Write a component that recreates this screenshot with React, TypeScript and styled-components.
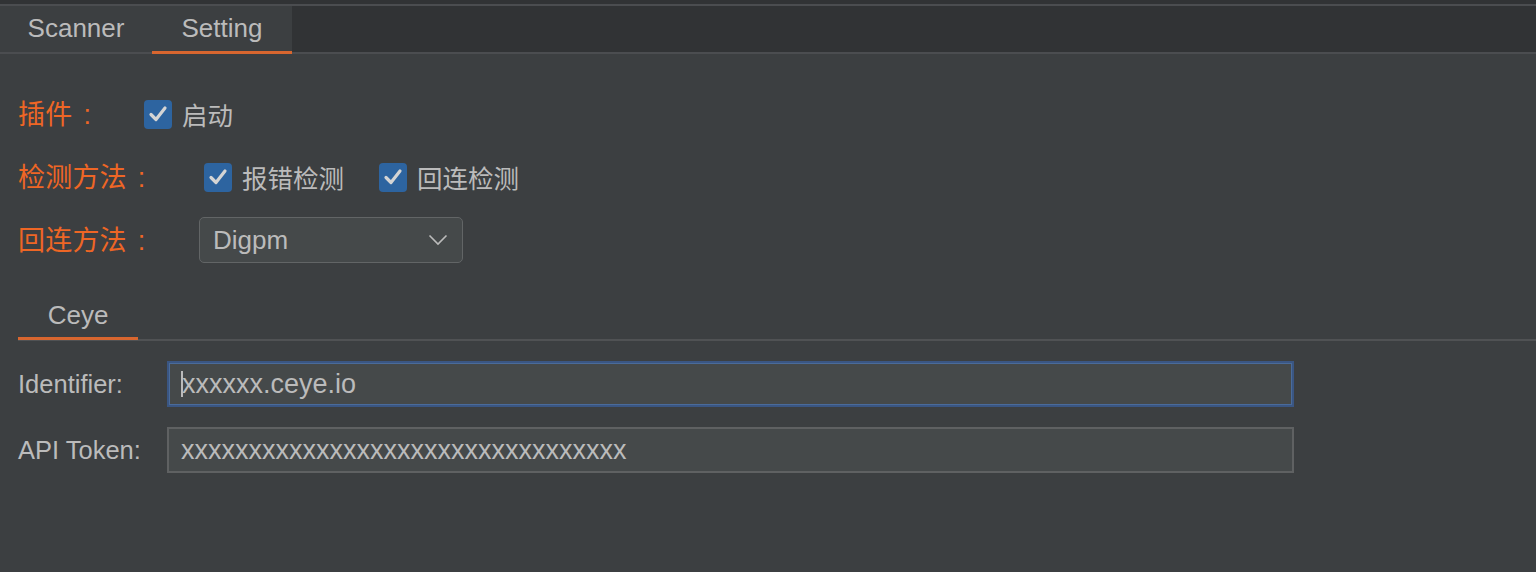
import React from "react";
import styled, { createGlobalStyle } from "styled-components";

const GlobalStyle = createGlobalStyle`
  html, body {
    margin: 0;
    padding: 0;
    background: #3c3f41;
  }
  body {
    font-family: "Liberation Sans", "Noto Sans CJK SC", sans-serif;
    color: #bbbbbb;
  }
  * { box-sizing: border-box; }
`;

const Page = styled.div`
  width: 1536px;
  height: 572px;
  background: #3c3f41;
  overflow: hidden;
  display: flex;
  flex-direction: column;
`;

const TopStrip = styled.div`
  height: 6px;
  background: #313335;
  border-bottom: 2px solid #4b4d50;
`;

const TabBar = styled.div`
  height: 48px;
  display: flex;
  background: #313335;
  border-bottom: 2px solid #4b4d50;
`;

const Tab = styled.div<{ $w: number; $active?: boolean }>`
  position: relative;
  width: ${(p) => p.$w}px;
  height: 46px;
  display: flex;
  align-items: center;
  justify-content: center;
  padding-bottom: 2px;
  background: #3c3f41;
  font-size: 26px;
  color: #bbbbbb;
  &::after {
    content: "";
    display: ${(p) => (p.$active ? "block" : "none")};
    position: absolute;
    left: 0;
    right: 0;
    bottom: -2px;
    height: 3px;
    background: #d8662f;
  }
`;

const Content = styled.div`
  padding: 37px 0 0 18px;
  display: flex;
  flex-direction: column;
  gap: 17px;
`;

const Row = styled.div`
  height: 46px;
  display: flex;
  align-items: center;
`;

const Label = styled.div<{ $w: number }>`
  width: ${(p) => p.$w}px;
  flex: none;
  font-family: "Noto Sans CJK SC", "Liberation Sans", sans-serif;
  font-size: 27px;
  color: #ee6625;
  line-height: 1;
  letter-spacing: 0.2px;
`;

const Colon = styled.span`
  font-family: "Liberation Sans", sans-serif;
  margin-left: 11px;
`;

const CheckGroup = styled.div`
  display: flex;
  align-items: center;
  gap: 35px;
`;

const CheckItem = styled.label`
  display: flex;
  align-items: center;
  gap: 10px;
  font-family: "Noto Sans CJK SC", "Liberation Sans", sans-serif;
  font-size: 25.5px;
  color: #bbbbbb;
  line-height: 1;
`;

const Box = styled.span`
  width: 28px;
  height: 29px;
  border-radius: 4px;
  background: #2d64a0;
  display: flex;
  align-items: center;
  justify-content: center;
`;

const Select = styled.div`
  width: 264px;
  height: 46px;
  border: 1px solid #626566;
  border-radius: 5px;
  background: #45494a;
  display: flex;
  align-items: center;
  justify-content: space-between;
  padding: 0 14px 0 13px;
  font-size: 26px;
  color: #bbbbbb;
`;

const SubTabBar = styled.div`
  margin: 31px 0 0 18px;
  display: flex;
  border-bottom: 2px solid #505254;
`;

const SubTab = styled.div`
  position: relative;
  width: 120px;
  height: 45px;
  display: flex;
  align-items: center;
  justify-content: center;
  padding-bottom: 2px;
  font-size: 26px;
  color: #bbbbbb;
  &::after {
    content: "";
    position: absolute;
    left: 0;
    right: 0;
    bottom: -1px;
    height: 3px;
    background: #d8662f;
  }
`;

const Form = styled.div`
  margin: 20px 0 0 18px;
  display: grid;
  grid-template-columns: 149px 1127px;
  row-gap: 20px;
  align-items: center;
`;

const FieldLabel = styled.div`
  font-size: 25.5px;
  color: #bbbbbb;
`;

const Field = styled.div<{ $focused?: boolean }>`
  height: 46px;
  background: #45494a;
  border: 2px solid ${(p) => (p.$focused ? "#3a5683" : "#5f6162")};
  box-shadow: ${(p) => (p.$focused ? "inset 0 0 0 1px #4a6b9a" : "none")};
  display: flex;
  align-items: center;
  padding-left: 12px;
  font-size: 27px;
  color: #bbbbbb;
  white-space: nowrap;
`;

const Caret = styled.span`
  display: inline-block;
  width: 2px;
  height: 26px;
  background: #bbbbbb;
  margin-right: -1px;
`;

const Check = () => (
  <svg width="20" height="18" viewBox="0 0 20 18">
    <polyline
      points="3,9.5 8,14.5 17,3"
      fill="none"
      stroke="#d4d4d4"
      strokeWidth="3.2"
      strokeLinecap="round"
      strokeLinejoin="round"
    />
  </svg>
);

const Chevron = () => (
  <svg width="20" height="12" viewBox="0 0 20 12">
    <polyline
      points="1.5,1.5 10,10 18.5,1.5"
      fill="none"
      stroke="#bbbbbb"
      strokeWidth="1.6"
    />
  </svg>
);

const CheckBox = ({ text }: { text: string }) => (
  <CheckItem>
    <Box>
      <Check />
    </Box>
    {text}
  </CheckItem>
);

export default function App() {
  return (
    <Page>
      <GlobalStyle />
      <TopStrip />
      <TabBar>
        <Tab $w={152}>Scanner</Tab>
        <Tab $w={140} $active>
          Setting
        </Tab>
      </TabBar>
      <Content>
        <Row>
          <Label $w={126}>
            插件<Colon>:</Colon>
          </Label>
          <CheckBox text="启动" />
        </Row>
        <Row>
          <Label $w={186}>
            检测方法<Colon>:</Colon>
          </Label>
          <CheckGroup>
            <CheckBox text="报错检测" />
            <CheckBox text="回连检测" />
          </CheckGroup>
        </Row>
        <Row>
          <Label $w={181}>
            回连方法<Colon>:</Colon>
          </Label>
          <Select>
            <span>Digpm</span>
            <Chevron />
          </Select>
        </Row>
      </Content>
      <SubTabBar>
        <SubTab>Ceye</SubTab>
      </SubTabBar>
      <Form>
        <FieldLabel>Identifier:</FieldLabel>
        <Field $focused>
          <Caret />
          xxxxxx.ceye.io
        </Field>
        <FieldLabel>API Token:</FieldLabel>
        <Field>xxxxxxxxxxxxxxxxxxxxxxxxxxxxxxxxx</Field>
      </Form>
    </Page>
  );
}
